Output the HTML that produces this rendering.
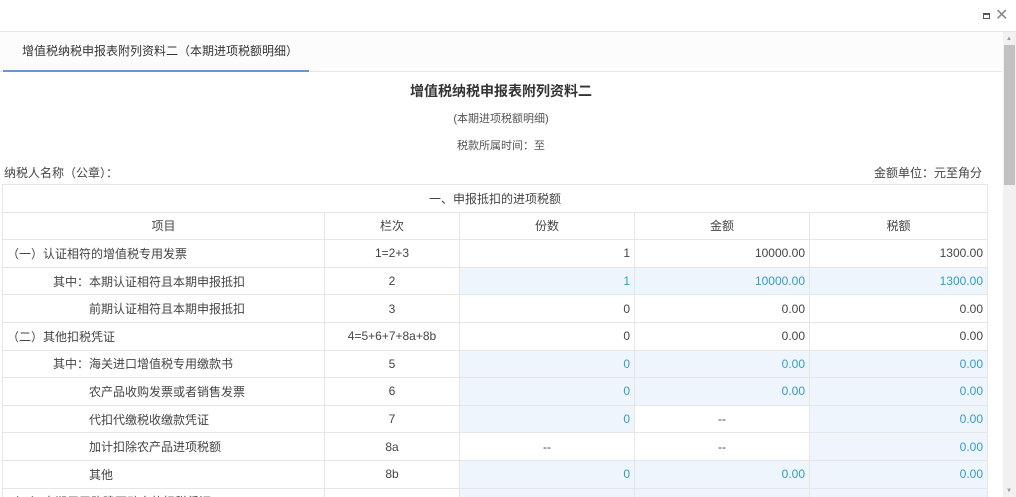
<!DOCTYPE html>
<html style="height:497px;overflow:hidden"><head><meta charset="utf-8"><style>
*{margin:0;padding:0;box-sizing:border-box}
body{width:1016px;height:497px;overflow:hidden;background:#fff;font-family:"Liberation Sans","Noto Sans CJK SC",sans-serif;color:#333;font-size:12px;position:relative}
.top{position:absolute;left:0;top:0;width:1016px;height:32px;border-bottom:1px solid #e8e8e8}
.tabbar{position:absolute;left:0;top:32px;width:1002px;height:40px;border-bottom:1px solid #e6e6e6;background:#fcfcfc}
.tab{position:absolute;left:3px;top:0;width:306px;height:40px;line-height:38px;padding-left:19px;font-size:12px;color:#333;border-bottom:2px solid #6b95c8}
.sb{position:absolute;left:1003px;top:32px;width:13px;height:465px;background:#f1f1f1}
.thumb{position:absolute;left:1004px;top:45px;width:11px;height:140px;background:#c1c1c1}
.c{position:absolute;text-align:center;width:1002px;left:0}
table{position:absolute;left:2px;top:184px;border-collapse:collapse;table-layout:fixed;width:985px}
td{border:1px solid #e6e6e6;height:27.6px;padding:0 4px;font-size:12px;color:#444;white-space:nowrap}
.r{text-align:right}.m{text-align:center}
.b{background:#eef5fc;color:#3a9cbf}
</style></head><body>
<div class="top"><div style="position:absolute;left:983px;top:13px;width:7px;height:6px;border:1px solid #555;border-top-width:2px"></div>
<div style="position:absolute;left:995px;top:5px;font-size:16px;color:#888">✕</div></div>
<div class="tabbar"><div class="tab">增值税纳税申报表附列资料二（本期进项税额明细）</div></div>
<div class="sb"></div><div class="thumb"></div>
<div style="position:absolute;left:1006px;top:36px;font-size:6px;color:#999">▲</div>
<div style="position:absolute;left:1006px;top:488px;font-size:6px;color:#999">▼</div>
<div class="c" style="top:81px;font-size:14px;font-weight:bold;color:#333">增值税纳税申报表附列资料二</div>
<div class="c" style="top:110px;font-size:11px;color:#555">(本期进项税额明细)</div>
<div class="c" style="top:137px;font-size:11px;color:#555">税款所属时间：至</div>
<div style="position:absolute;left:4px;top:164px;color:#444">纳税人名称（公章）：</div>
<div style="position:absolute;right:34px;top:164px;color:#444">金额单位：元至角分</div>
<table>
<colgroup><col style="width:322px"><col style="width:135px"><col style="width:175px"><col style="width:175px"><col style="width:178px"></colgroup>
<tr><td colspan="5" class="m">一、申报抵扣的进项税额</td></tr>
<tr><td class="m">项目</td><td class="m">栏次</td><td class="m">份数</td><td class="m">金额</td><td class="m">税额</td></tr>
<tr><td>（一）认证相符的增值税专用发票</td><td class="m">1=2+3</td><td class="r">1</td><td class="r">10000.00</td><td class="r">1300.00</td></tr>
<tr><td style="padding-left:50px">其中：本期认证相符且本期申报抵扣</td><td class="m">2</td><td class="r b">1</td><td class="r b">10000.00</td><td class="r b">1300.00</td></tr>
<tr><td style="padding-left:86px">前期认证相符且本期申报抵扣</td><td class="m">3</td><td class="r">0</td><td class="r">0.00</td><td class="r">0.00</td></tr>
<tr><td>（二）其他扣税凭证</td><td class="m">4=5+6+7+8a+8b</td><td class="r">0</td><td class="r">0.00</td><td class="r">0.00</td></tr>
<tr><td style="padding-left:50px">其中：海关进口增值税专用缴款书</td><td class="m">5</td><td class="r b">0</td><td class="r b">0.00</td><td class="r b">0.00</td></tr>
<tr><td style="padding-left:86px">农产品收购发票或者销售发票</td><td class="m">6</td><td class="r b">0</td><td class="r b">0.00</td><td class="r b">0.00</td></tr>
<tr><td style="padding-left:86px">代扣代缴税收缴款凭证</td><td class="m">7</td><td class="r b">0</td><td class="m">--</td><td class="r b">0.00</td></tr>
<tr><td style="padding-left:86px">加计扣除农产品进项税额</td><td class="m">8a</td><td class="m">--</td><td class="m">--</td><td class="r b">0.00</td></tr>
<tr><td style="padding-left:86px">其他</td><td class="m">8b</td><td class="r b">0</td><td class="r b">0.00</td><td class="r b">0.00</td></tr>
<tr><td>（三）本期用于购建不动产的扣税凭证</td><td class="m">9</td><td class="r b"></td><td class="r b"></td><td class="r b"></td></tr>
</table>
</body></html>
